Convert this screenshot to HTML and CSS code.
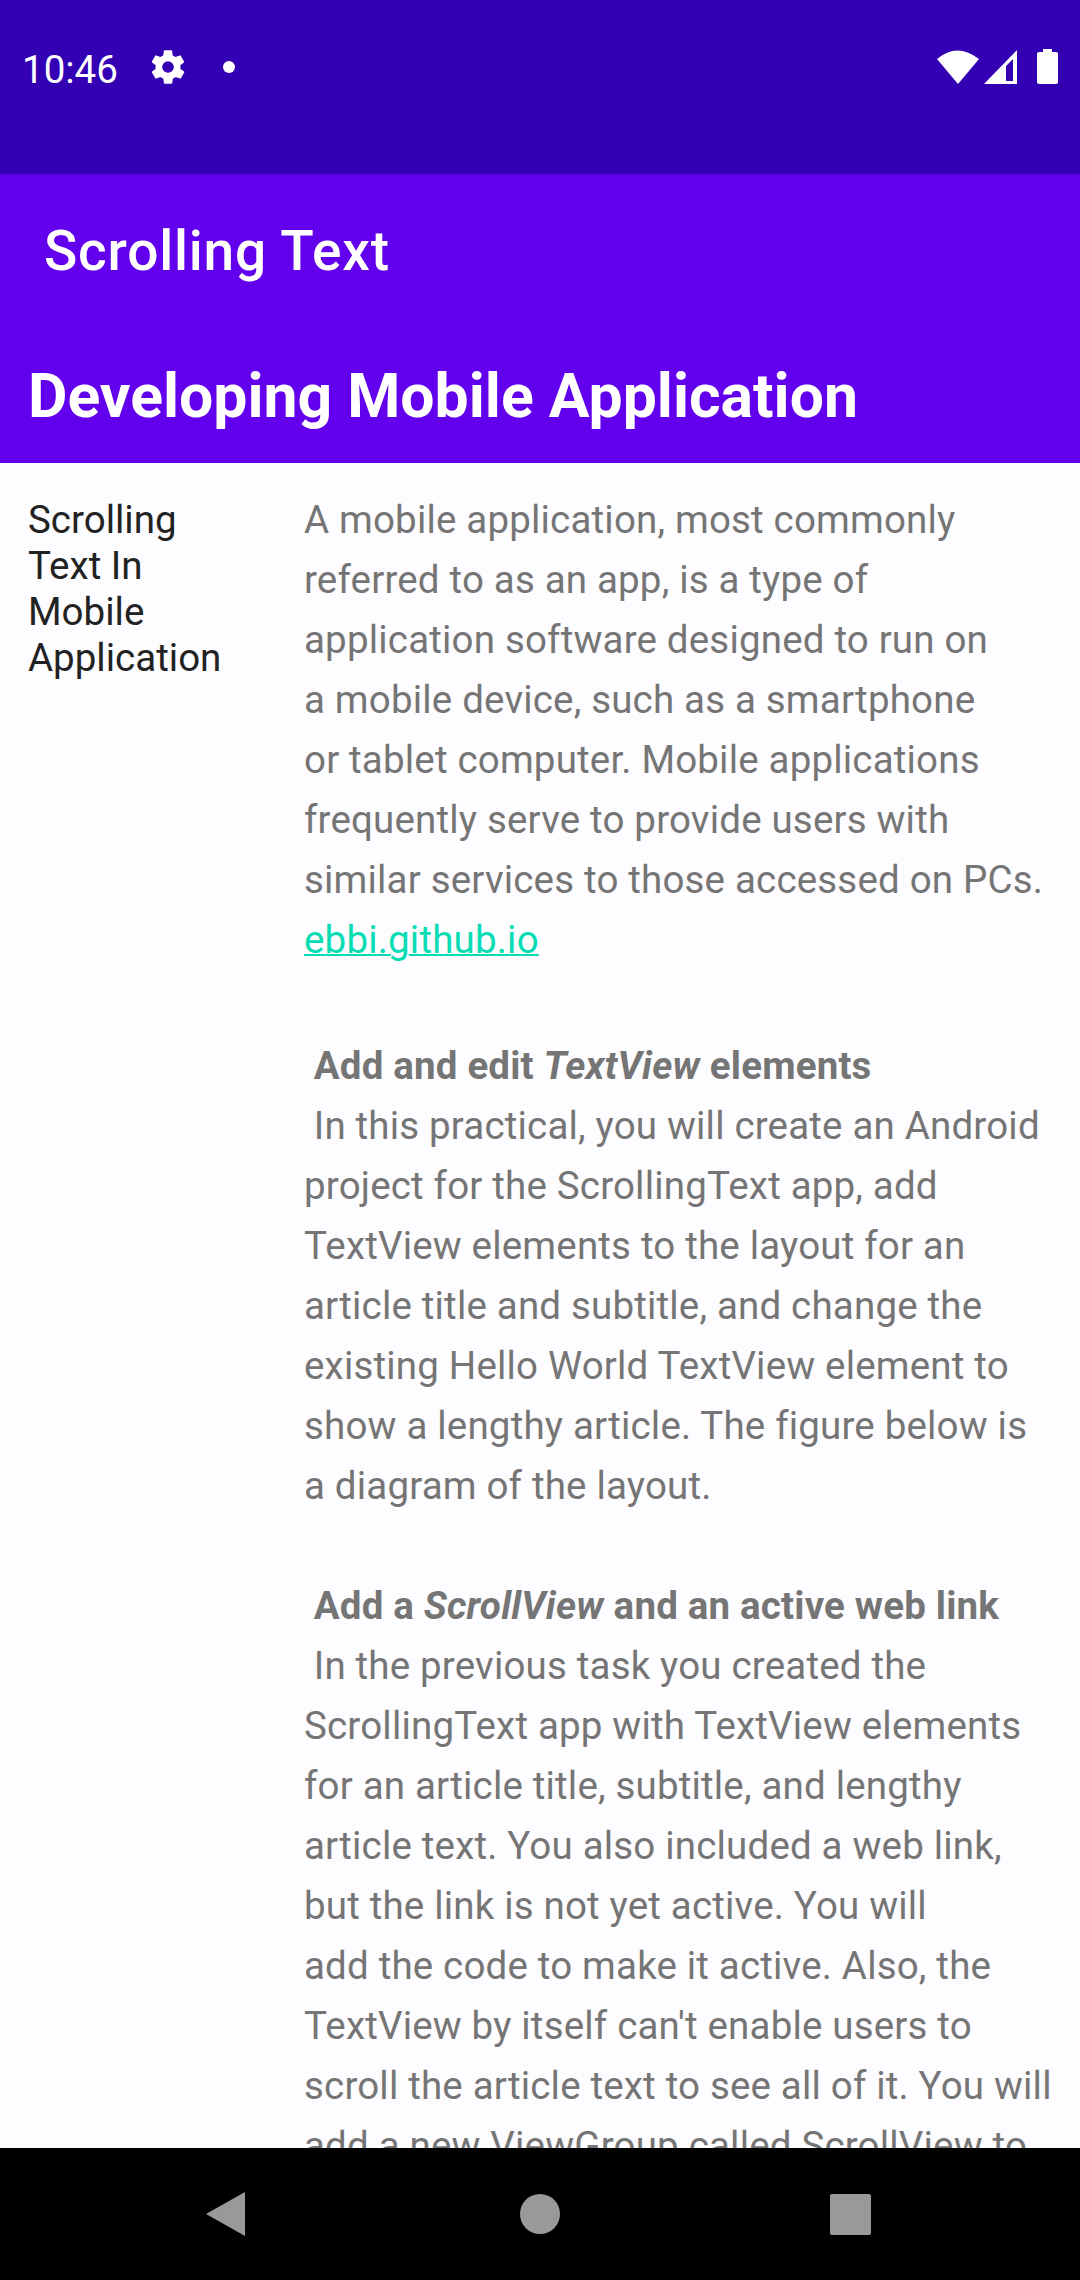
FILE: index.html
```html
<!DOCTYPE html>
<html lang="en">
<head>
<meta charset="utf-8">
<title>Scrolling Text</title>
<link rel="stylesheet" href="styles.css">
</head>
<body>
<div class="screen">
<header class="status">
<span class="clock">10:46</span>
<svg class="gear" viewBox="0 0 24 24"><path fill-rule="evenodd" d="M19.400 13a7.500 7.500 0 0 0 0-2l2.100-1.650a.5.5 0 0 0 .12-.64l-2-3.460a.5.5 0 0 0-.6-.22l-2.500 1a7.300 7.300 0 0 0-1.700-.98L14.500 2.400a.5.5 0 0 0-.5-.4h-4a.5.5 0 0 0-.5.4l-.38 2.650a7.300 7.300 0 0 0-1.700.98l-2.500-1a.5.5 0 0 0-.6.22l-2 3.460a.5.5 0 0 0 .12.64L4.600 11a7.500 7.500 0 0 0 0 2l-2.100 1.650a.5.5 0 0 0-.12.64l2 3.460c.12.22.38.3.6.22l2.500-1c.52.4 1.080.73 1.700.98l.38 2.650c.03.24.25.4.5.4h4c.25 0 .47-.16.5-.4l.38-2.650a7.300 7.300 0 0 0 1.700-.98l2.500 1c.22.08.48 0 .6-.22l2-3.460a.5.5 0 0 0-.12-.64zM12 15.500a3.500 3.500 0 1 1 0-7 3.500 3.500 0 0 1 0 7z"/></svg>
<span class="dot"></span>
<svg class="signals" viewBox="0 0 122 40"><path d="M0 10Q20-7 42 10L21 35Z"/><path fill-rule="evenodd" d="M47 35L80 1V35ZM69 32H76V10L69 17Z"/><path d="M106 0h9v3h4q2 0 2 2v28q0 2-2 2h-17q-2 0-2-2V5q0-2 2-2h4z"/></svg>
</header>
<div class="appbar">Scrolling Text</div>
<h1 class="heading">Developing Mobile Application</h1>
<main class="content">
<h2 class="subtitle">Scrolling<br>Text In<br>Mobile<br>Application</h2>
<article class="article">
<p>A mobile application, most commonly<br>referred to as an app, is a type of<br>application software designed to run on<br>a mobile device, such as a smartphone<br>or tablet computer. Mobile applications<br>frequently serve to provide users with<br>similar services to those accessed on PCs.<br><a class="link">ebbi.github.io</a></p>
<p class="second"><b>&nbsp;Add and edit <i>TextView</i> elements</b><br>&nbsp;In this practical, you will create an Android<br>project for the ScrollingText app, add<br>TextView elements to the layout for an<br>article title and subtitle, and change the<br>existing Hello World TextView element to<br>show a lengthy article. The figure below is<br>a diagram of the layout.</p>
<p><b>&nbsp;Add a <i>ScrollView</i> and an active web link</b><br>&nbsp;In the previous task you created the<br>ScrollingText app with TextView elements<br>for an article title, subtitle, and lengthy<br>article text. You also included a web link,<br>but the link is not yet active. You will<br>add the code to make it active. Also, the<br>TextView by itself can't enable users to<br>scroll the article text to see all of it. You will<br>add a new ViewGroup called ScrollView to</p>
</article>
</main>
<nav class="nav">
<svg class="navicons" viewBox="0 0 1080 132"><path d="M206 66L245 44V88Z"/><circle cx="540" cy="66" r="20"/><rect x="830" y="46" width="41" height="41" rx="2"/></svg>
</nav>
</div>
</body>
</html>
```
FILE: styles.css
```css
body{margin:0;font-family:Roboto,sans-serif}
.screen{width:1080px;height:2280px;display:flex;flex-direction:column;overflow:hidden;background:#fdfcff}
.status{height:174px;flex:none;box-sizing:border-box;padding:42px 21px 0 22px;background:#3300b3;color:#fff;display:flex;align-items:flex-start}
.clock{width:97px;font-size:38.5px;line-height:55px}
.gear{width:40px;height:42px;margin:4px 0 0 29px;fill:#fff}
.dot{width:12px;height:12px;border-radius:50%;background:#fff;margin:19px 0 0 35px}
.signals{width:122px;height:40px;margin:7px 0 0 auto;fill:#fff}
.appbar{height:154px;flex:none;background:#6200ee;color:#fff;font-size:55px;font-weight:500;line-height:154px;letter-spacing:.8px;padding-left:44px}
.heading{margin:0;height:135px;flex:none;background:#6200ee;color:#fff;font-size:60.7px;line-height:138px;padding-left:28px}
.content{flex:1;min-height:0;overflow:hidden;display:flex;align-items:flex-start}
.subtitle{margin:0;width:276px;flex:none;padding:34px 0 0 28px;box-sizing:border-box;font-size:38.5px;font-weight:400;line-height:46px;color:#222}
.article{padding:27px 0 0 28px;font-size:38.5px;line-height:60px;letter-spacing:.18px;color:#757575;white-space:nowrap}
.article p{margin:0 0 60px}
.article .second{margin-top:66px}
.link{color:#06dcb4;text-decoration:underline;text-decoration-thickness:2px}
.nav{height:132px;flex:none;background:#000}
.navicons{display:block;width:1080px;height:132px;fill:#999}
```
